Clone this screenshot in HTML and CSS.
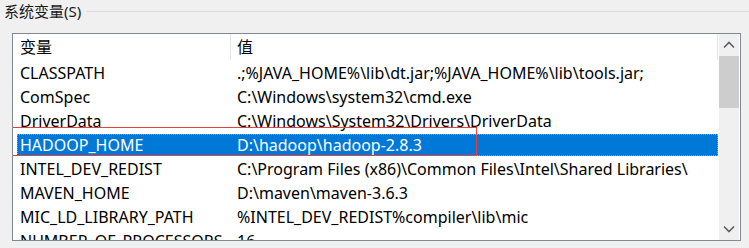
FILE: index.html
```html
<!DOCTYPE html>
<html>
  <head>
    <meta charset="utf-8">
    <title>系统变量</title>
    <link rel="stylesheet" href="styles.css">
  </head>
  <body>
    <div class="group">
      <div class="group-title">
        <span class="legend">系统变量(S)</span>
        <span class="rule"></span>
      </div>
      <div class="listbox">
        <div class="list">
          <div class="head">
            <div class="col name">变量</div>
            <div class="col value">值</div>
          </div>
          <div class="row"><div class="col name">CLASSPATH</div><div class="col value">.;%JAVA_HOME%\lib\dt.jar;%JAVA_HOME%\lib\tools.jar;</div></div>
          <div class="row"><div class="col name">ComSpec</div><div class="col value">C:\Windows\system32\cmd.exe</div></div>
          <div class="row"><div class="col name">DriverData</div><div class="col value">C:\Windows\System32\Drivers\DriverData</div></div>
          <div class="row selected"><div class="col name">HADOOP_HOME</div><div class="col value">D:\hadoop\hadoop-2.8.3</div><span class="mark"></span></div>
          <div class="row"><div class="col name">INTEL_DEV_REDIST</div><div class="col value">C:\Program Files (x86)\Common Files\Intel\Shared Libraries\</div></div>
          <div class="row"><div class="col name">MAVEN_HOME</div><div class="col value">D:\maven\maven-3.6.3</div></div>
          <div class="row"><div class="col name">MIC_LD_LIBRARY_PATH</div><div class="col value">%INTEL_DEV_REDIST%compiler\lib\mic</div></div>
          <div class="row"><div class="col name">NUMBER_OF_PROCESSORS</div><div class="col value">16</div></div>
        </div>
        <div class="scrollbar">
          <div class="arrow">
            <svg width="12" height="8" viewBox="0 0 12 8"><path d="M1 6.5 L6 1.5 L11 6.5" fill="none" stroke="#606060" stroke-width="1.6"/></svg>
          </div>
          <div class="thumb"></div>
          <div class="track"></div>
          <div class="arrow">
            <svg width="12" height="8" viewBox="0 0 12 8"><path d="M1 1.5 L6 6.5 L11 1.5" fill="none" stroke="#606060" stroke-width="1.6"/></svg>
          </div>
        </div>
      </div>
    </div>
  </body>
</html>
```

FILE: styles.css
```css
body {
  margin: 0;
  background: #f0f0f0;
  font-family: "Noto Sans", "Noto Sans CJK SC", sans-serif;
  font-size: 16px;
  color: #000;
  overflow: hidden;
}

.group-title {
  display: flex;
  align-items: center;
  height: 22px;
  padding-left: 4px;
}

.legend {
  font-size: 15px;
  color: #1a1a1a;
  line-height: 22px;
}

.rule {
  flex: 1;
  height: 1px;
  margin-left: 5px;
  background: #dcdcdc;
}

.listbox {
  margin: 11px 0 0 12px;
  width: 727px;
  height: 206px;
  border: 1px solid #828790;
  background: #fff;
  display: flex;
  overflow: hidden;
}

.list {
  flex: 1;
  overflow: hidden;
}

.head {
  display: flex;
  height: 27px;
  align-items: flex-start;
}

.head .col {
  height: 26px;
  line-height: 26px;
}

.head .name {
  border-right: 1px solid #e5e5e5;
}

.head .value {
  flex: 1;
  border-right: 1px solid #e5e5e5;
}

.col.name {
  width: 210px;
  padding-left: 7px;
}

.col.value {
  padding-left: 6px;
  white-space: nowrap;
}

.row {
  position: relative;
  display: flex;
  height: 24px;
  line-height: 24px;
  margin-left: 4px;
  white-space: nowrap;
}

.row .col.name {
  width: 210px;
  padding-left: 3px;
}

.row .col.value {
  padding-left: 7px;
}

.row.selected {
  margin: 1px 0 1px 4px;
  height: 22px;
  line-height: 22px;
  background: #0078d7;
  color: #fff;
  outline: 1px dotted #f08c28;
  outline-offset: -1px;
}

.mark {
  position: absolute;
  left: -8px;
  top: -7px;
  width: 466px;
  height: 27px;
  border: 1px solid #e8403a;
  pointer-events: none;
}

.scrollbar {
  width: 20px;
  margin: 0 1px 0 1px;
  background: #f0f0f0;
  display: flex;
  flex-direction: column;
}

.arrow {
  height: 22px;
  display: flex;
  align-items: center;
  justify-content: center;
}

.thumb {
  height: 52px;
  background: #cdcdcd;
}

.track {
  flex: 1;
}
```
